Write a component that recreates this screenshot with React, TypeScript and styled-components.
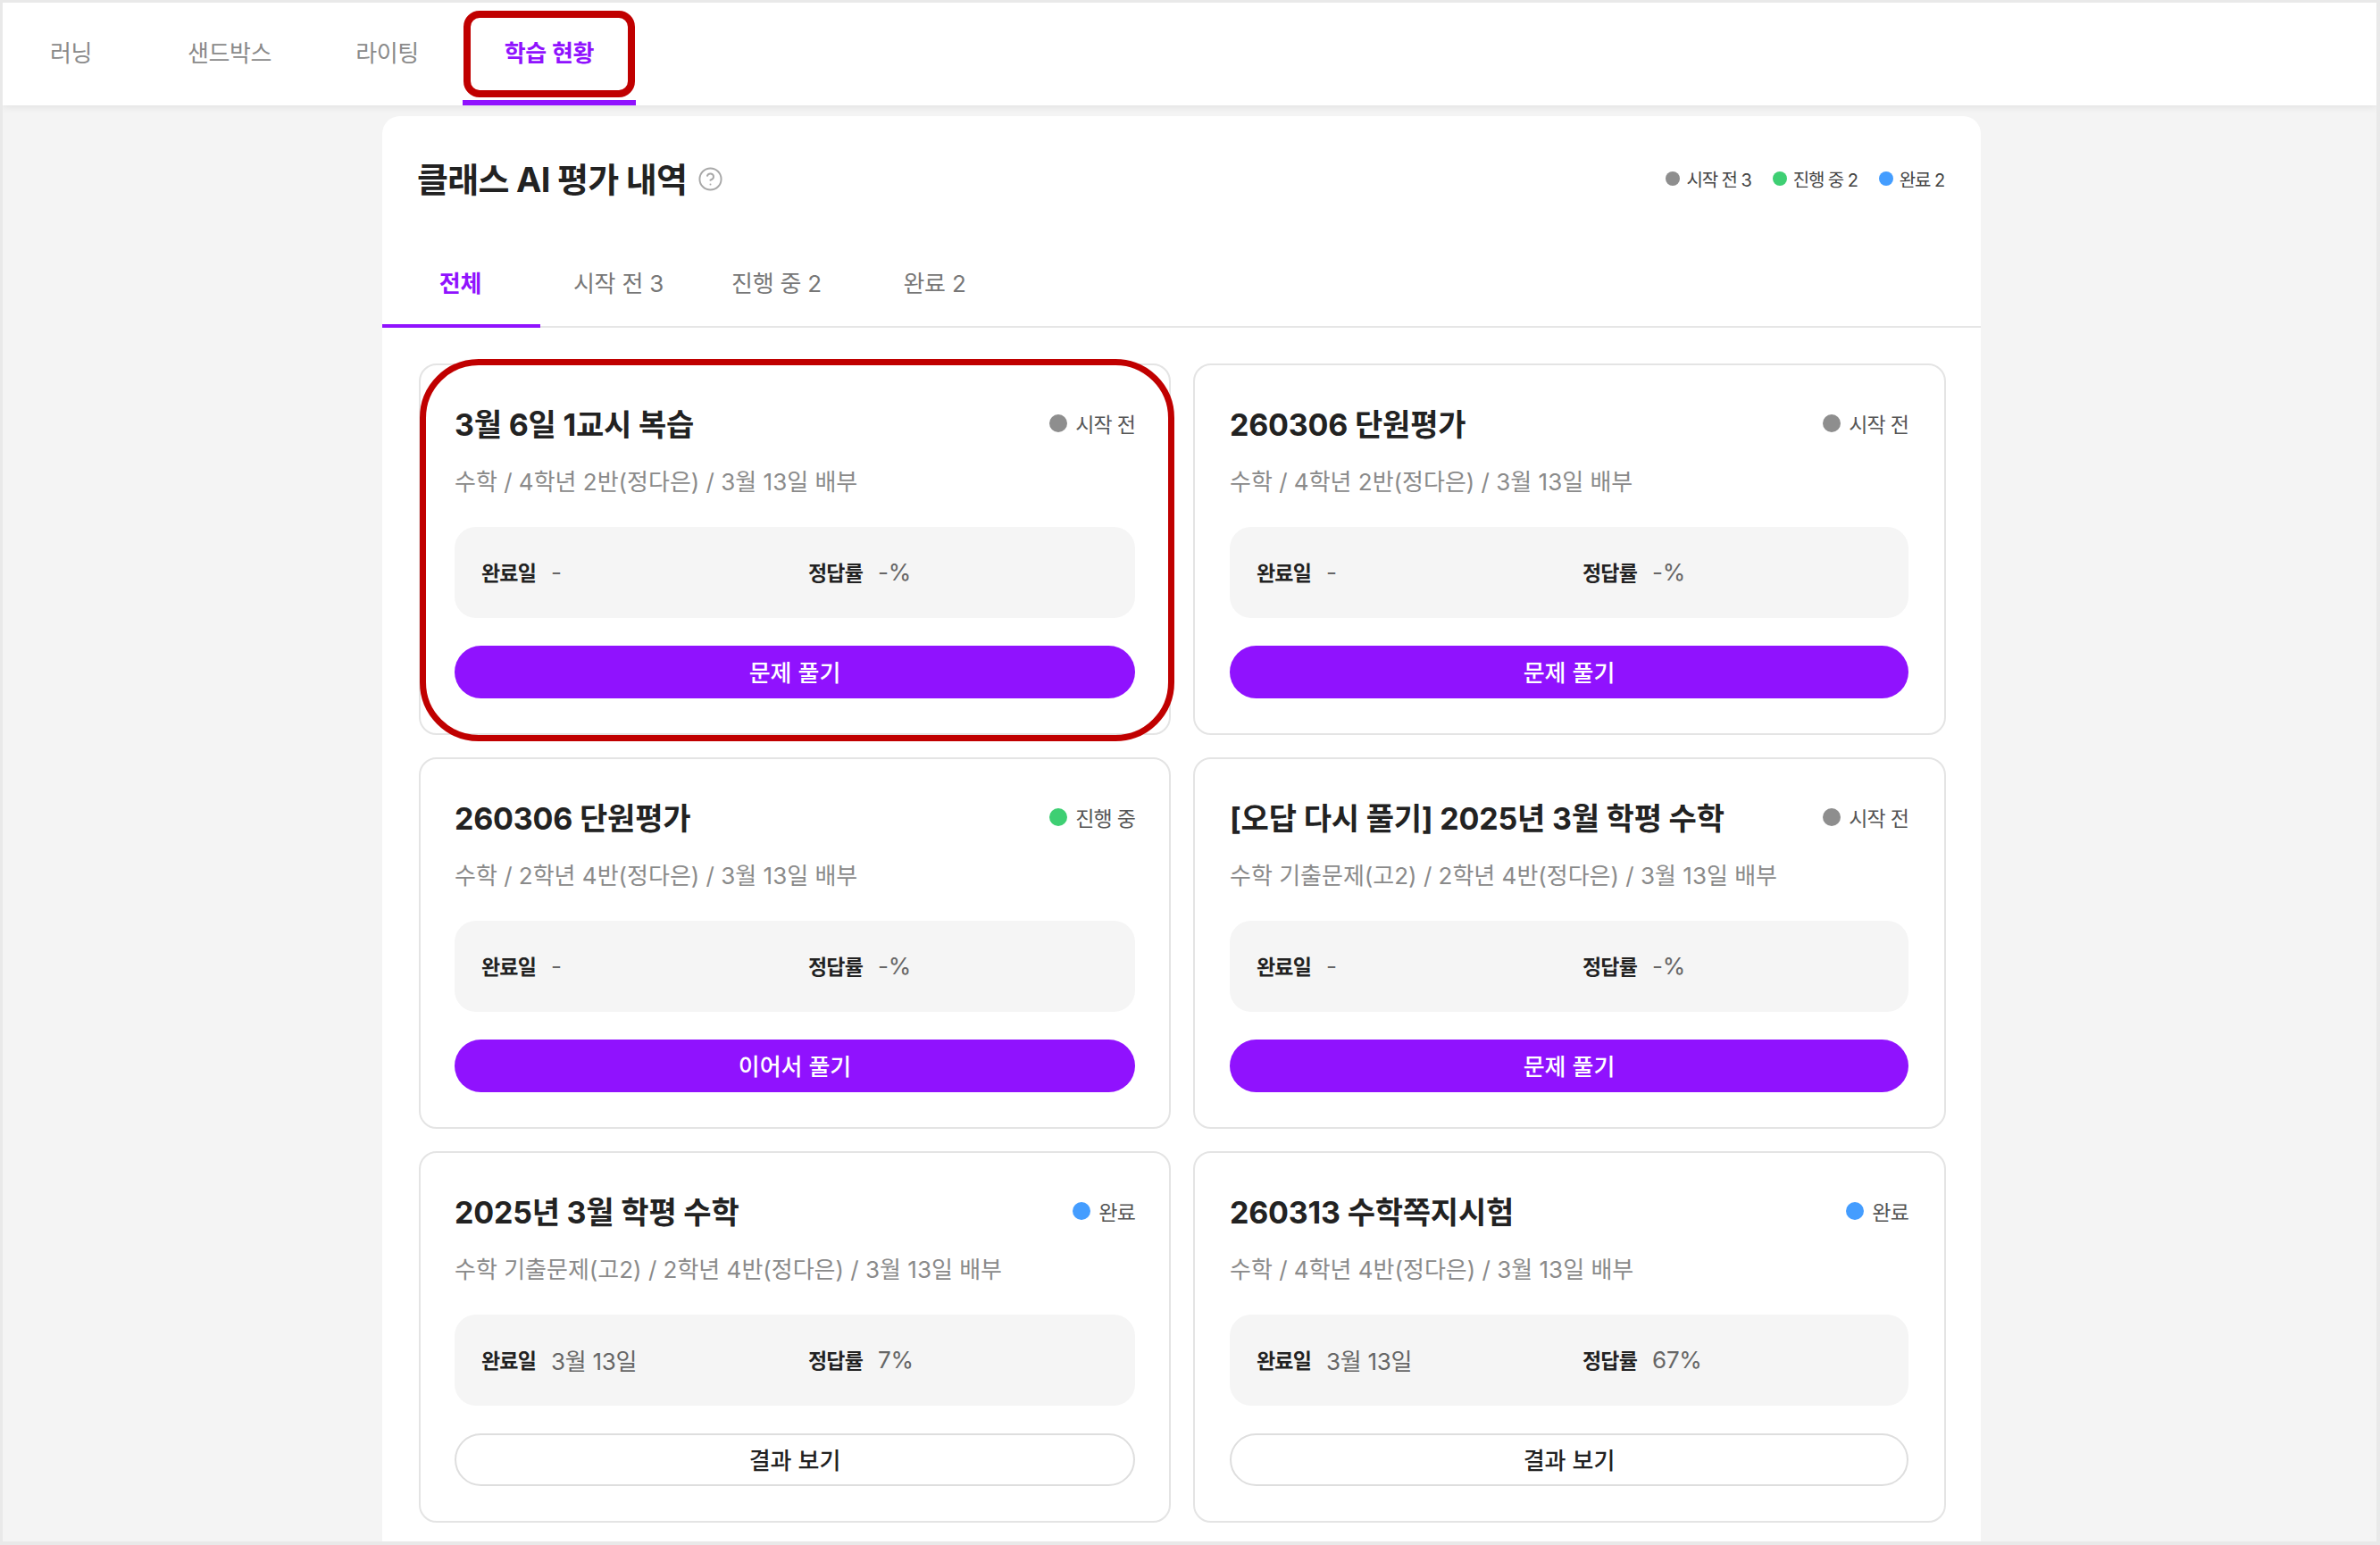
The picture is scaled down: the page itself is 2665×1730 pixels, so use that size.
import React from 'react';
import styled, { createGlobalStyle } from 'styled-components';
import { CircleHelp } from 'lucide-react';

const GlobalStyle = createGlobalStyle`
  html, body {
    margin: 0;
    padding: 0;
    background: #e9e9e9;
  }
  #root {
    height: 1730px;
    overflow: hidden;
  }
  * {
    box-sizing: border-box;
  }
`;

const colors = {
  todo: '#8e8e8e',
  doing: '#3ecf73',
  done: '#449dff',
};

type Status = keyof typeof colors;

const Frame = styled.div`
  height: 1730px;
  padding: 3px 4px 4px 3px;
  font-family: Inter, 'Noto Sans CJK KR', sans-serif;
  color: #222;
`;

const Screen = styled.div`
  height: 100%;
  background: #f4f4f4;
  overflow: hidden;
`;

const Nav = styled.nav`
  position: relative;
  z-index: 1;
  display: flex;
  height: 115px;
  padding-left: 6px;
  background: #fff;
  box-shadow: 0 2px 8px rgba(0, 0, 0, 0.08);
`;

const NavTab = styled.div<{ $active?: boolean; $gap?: number }>`
  position: relative;
  display: flex;
  align-items: center;
  padding: 0 47px 1px;
  margin-right: ${({ $gap }) => $gap ?? 0}px;
  font-size: 26px;
  letter-spacing: -0.4px;
  font-weight: ${({ $active }) => ($active ? 600 : 400)};
  color: ${({ $active }) => ($active ? '#9012fe' : '#8a8a8a')};
  border-bottom: 6px solid ${({ $active }) => ($active ? '#9012fe' : 'transparent')};
`;

const NavMark = styled.span`
  position: absolute;
  top: 9px;
  left: 1px;
  right: 1px;
  bottom: 3px;
  border: 8px solid #c00000;
  border-radius: 18px;
`;

const Panel = styled.main`
  width: 1790px;
  height: 100%;
  margin: 12px 0 0 425px;
  padding-bottom: 40px;
  background: #fff;
  border-radius: 20px 20px 0 0;
`;

const PanelHeader = styled.header`
  display: flex;
  align-items: center;
  justify-content: space-between;
  height: 140px;
  padding: 0 41px 3px 39px;
`;

const TitleGroup = styled.div`
  display: flex;
  align-items: center;
  gap: 12px;
`;

const PanelTitle = styled.h1`
  margin: 0;
  font-size: 38px;
  font-weight: 700;
  letter-spacing: -0.7px;
  color: #222;
`;

const HelpIcon = styled(CircleHelp)`
  width: 29px;
  height: 29px;
  margin-top: 3px;
  color: #a8a8a8;
  stroke-width: 1.6;
`;

const Legend = styled.div`
  display: flex;
  align-items: center;
  gap: 24px;
  margin-top: 3px;
`;

const LegendItem = styled.div`
  display: flex;
  align-items: center;
  gap: 7px;
  font-size: 20px;
  letter-spacing: -1.1px;
  color: #444;
`;

const Dot = styled.span<{ $status: Status; $size: number }>`
  flex: none;
  width: ${({ $size }) => $size}px;
  height: ${({ $size }) => $size}px;
  border-radius: 50%;
  background: ${({ $status }) => colors[$status]};
`;

const Tabs = styled.div`
  display: flex;
  height: 97px;
  border-bottom: 2px solid #e6e6e6;
`;

const TabItem = styled.div<{ $active?: boolean }>`
  display: flex;
  align-items: center;
  justify-content: center;
  width: 177px;
  height: 97px;
  padding: 0 2px 2px 0;
  font-size: 26px;
  letter-spacing: -0.2px;
  font-weight: ${({ $active }) => ($active ? 600 : 400)};
  color: ${({ $active }) => ($active ? '#9012fe' : '#777')};
  border-bottom: 4px solid ${({ $active }) => ($active ? '#9012fe' : 'transparent')};
`;

const Grid = styled.section`
  display: grid;
  grid-template-columns: 842px 843px;
  grid-auto-rows: 416px;
  gap: 25px;
  padding: 40px 0 0 41px;
`;

const Card = styled.article`
  position: relative;
  display: flex;
  flex-direction: column;
  padding: 0 38px;
  border: 2px solid #e4e4e4;
  border-radius: 20px;
  background: #fff;

  &:nth-child(even) {
    padding: 0 40px 0 39px;
  }
`;

const CardMark = styled.span`
  position: absolute;
  top: -7px;
  left: -1px;
  right: -6px;
  bottom: -9px;
  border: 7px solid #c00000;
  border-radius: 66px;
  pointer-events: none;
`;

const CardTop = styled.div`
  display: flex;
  align-items: center;
  justify-content: space-between;
  height: 48px;
  margin-top: 40px;
`;

const CardTitle = styled.h2`
  margin: 0;
  font-size: 34px;
  font-weight: 700;
  letter-spacing: -0.2px;
  color: #222;
`;

const StatusLabel = styled.div`
  display: flex;
  align-items: center;
  gap: 9px;
  margin-top: 1px;
  font-size: 23px;
  letter-spacing: -0.8px;
  color: #555;
`;

const CardMeta = styled.p`
  height: 36px;
  margin: 25px 0 0;
  font-size: 26px;
  line-height: 36px;
  letter-spacing: 0;
  color: #8a8a8a;
`;

const InfoBox = styled.div`
  display: grid;
  grid-template-columns: 1fr 1fr;
  gap: 30px;
  align-items: center;
  height: 102px;
  margin-top: 32px;
  padding: 0 30px 2px;
  border-radius: 24px;
  background: #f5f5f5;
`;

const InfoItem = styled.div`
  display: flex;
  align-items: center;
  gap: 17px;
`;

const InfoLabel = styled.span`
  font-size: 23px;
  font-weight: 600;
  letter-spacing: -0.8px;
  color: #222;
`;

const InfoValue = styled.span`
  font-size: 26px;
  letter-spacing: -0.3px;
  color: #666;
`;

const ActionButton = styled.button<{ $outline?: boolean }>`
  display: block;
  width: 100%;
  height: 59px;
  margin-top: 31px;
  padding: 0 0 2px;
  border: ${({ $outline }) => ($outline ? '2px solid #dedede' : 'none')};
  border-radius: 30px;
  background: ${({ $outline }) => ($outline ? '#fff' : '#9012fe')};
  color: ${({ $outline }) => ($outline ? '#222' : '#fff')};
  font-family: inherit;
  font-size: 26px;
  font-weight: 500;
  letter-spacing: 0;
`;

const navTabs = [
  { label: '러닝', gap: 13 },
  { label: '샌드박스', gap: 0 },
  { label: '라이팅', gap: 2 },
];
const panelTabs = ['전체', '시작 전 3', '진행 중 2', '완료 2'];

const legend: { status: Status; label: string }[] = [
  { status: 'todo', label: '시작 전 3' },
  { status: 'doing', label: '진행 중 2' },
  { status: 'done', label: '완료 2' },
];

const statusText: Record<Status, string> = {
  todo: '시작 전',
  doing: '진행 중',
  done: '완료',
};

const cards: {
  title: string;
  meta: string;
  status: Status;
  date: string;
  rate: string;
  action: string;
  marked?: boolean;
}[] = [
  { title: '3월 6일 1교시 복습', meta: '수학 / 4학년 2반(정다은) / 3월 13일 배부', status: 'todo', date: '-', rate: '-%', action: '문제 풀기', marked: true },
  { title: '260306 단원평가', meta: '수학 / 4학년 2반(정다은) / 3월 13일 배부', status: 'todo', date: '-', rate: '-%', action: '문제 풀기' },
  { title: '260306 단원평가', meta: '수학 / 2학년 4반(정다은) / 3월 13일 배부', status: 'doing', date: '-', rate: '-%', action: '이어서 풀기' },
  { title: '[오답 다시 풀기] 2025년 3월 학평 수학', meta: '수학 기출문제(고2) / 2학년 4반(정다은) / 3월 13일 배부', status: 'todo', date: '-', rate: '-%', action: '문제 풀기' },
  { title: '2025년 3월 학평 수학', meta: '수학 기출문제(고2) / 2학년 4반(정다은) / 3월 13일 배부', status: 'done', date: '3월 13일', rate: '7%', action: '결과 보기' },
  { title: '260313 수학쪽지시험', meta: '수학 / 4학년 4반(정다은) / 3월 13일 배부', status: 'done', date: '3월 13일', rate: '67%', action: '결과 보기' },
];

const App: React.FC = () => (
  <Frame>
    <GlobalStyle />
    <Screen>
      <Nav>
        {navTabs.map((tab) => (
          <NavTab key={tab.label} $gap={tab.gap}>{tab.label}</NavTab>
        ))}
        <NavTab $active>
          학습 현황
          <NavMark />
        </NavTab>
      </Nav>
      <Panel>
        <PanelHeader>
          <TitleGroup>
            <PanelTitle>클래스 AI 평가 내역</PanelTitle>
            <HelpIcon />
          </TitleGroup>
          <Legend>
            {legend.map((item) => (
              <LegendItem key={item.status}>
                <Dot $status={item.status} $size={16} />
                {item.label}
              </LegendItem>
            ))}
          </Legend>
        </PanelHeader>
        <Tabs>
          {panelTabs.map((tab, i) => (
            <TabItem key={tab} $active={i === 0}>{tab}</TabItem>
          ))}
        </Tabs>
        <Grid>
          {cards.map((card, i) => (
            <Card key={i}>
              <CardTop>
                <CardTitle>{card.title}</CardTitle>
                <StatusLabel>
                  <Dot $status={card.status} $size={20} />
                  {statusText[card.status]}
                </StatusLabel>
              </CardTop>
              <CardMeta>{card.meta}</CardMeta>
              <InfoBox>
                <InfoItem>
                  <InfoLabel>완료일</InfoLabel>
                  <InfoValue>{card.date}</InfoValue>
                </InfoItem>
                <InfoItem>
                  <InfoLabel>정답률</InfoLabel>
                  <InfoValue>{card.rate}</InfoValue>
                </InfoItem>
              </InfoBox>
              <ActionButton $outline={card.status === 'done'}>{card.action}</ActionButton>
              {card.marked && <CardMark />}
            </Card>
          ))}
        </Grid>
      </Panel>
    </Screen>
  </Frame>
);

export default App;
